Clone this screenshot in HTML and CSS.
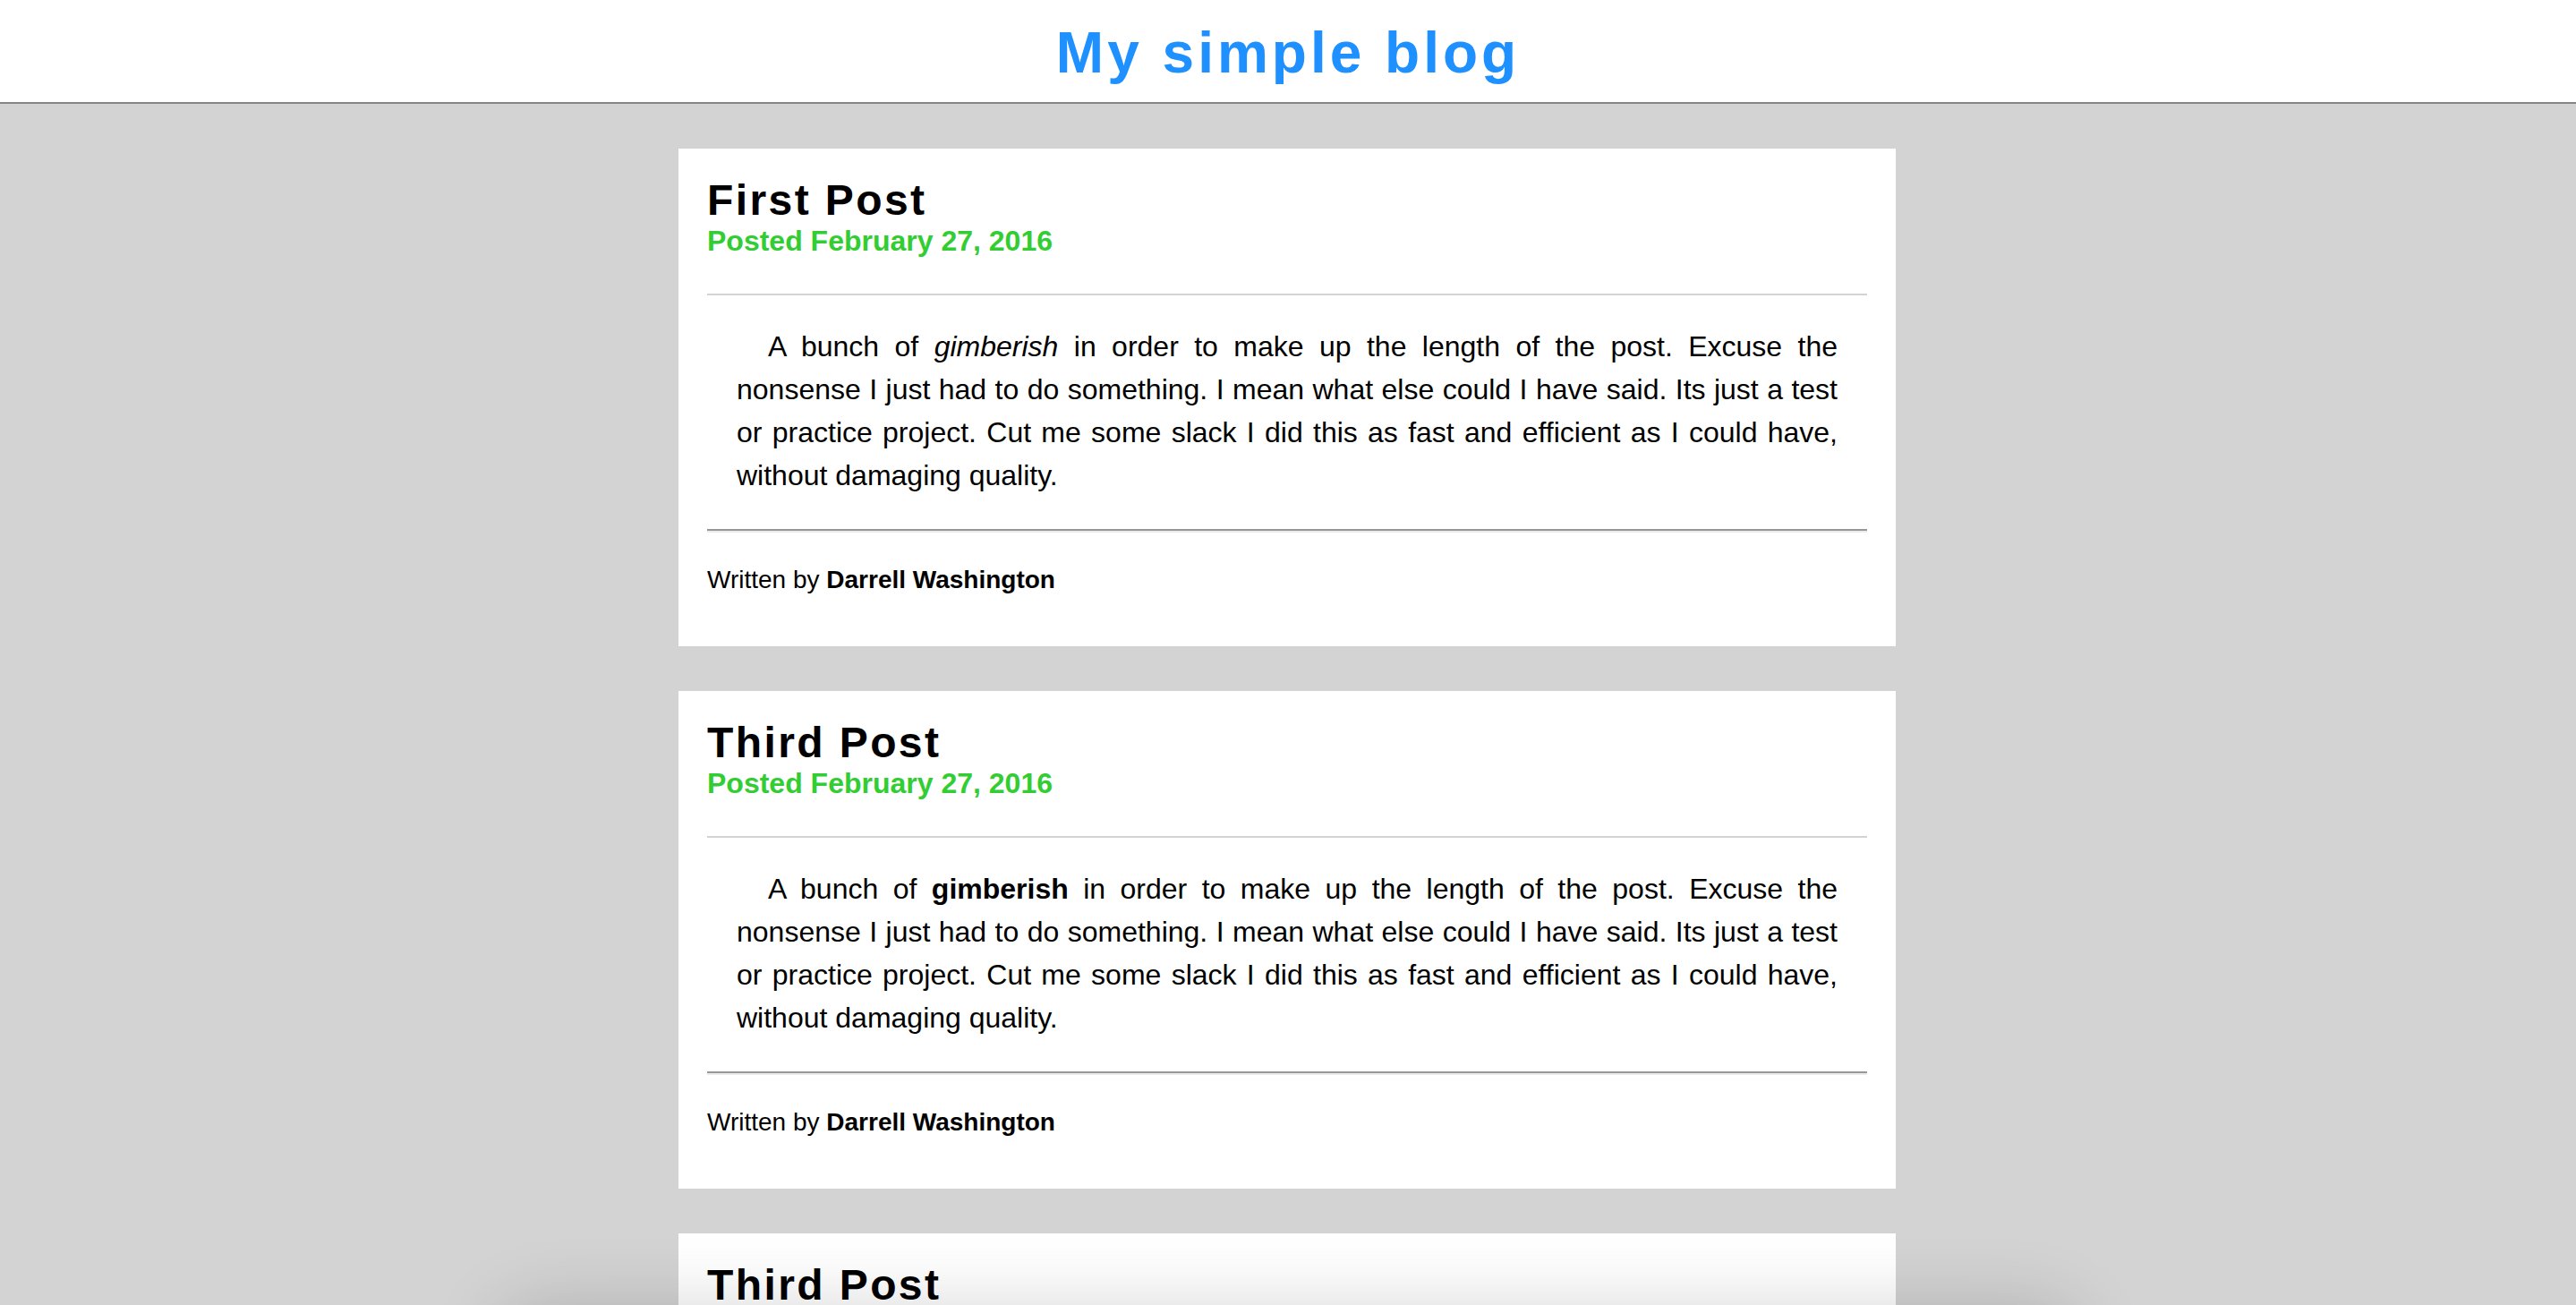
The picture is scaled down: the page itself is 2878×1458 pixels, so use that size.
FILE: index.html
```html
<!DOCTYPE html>
<html lang="en">
<head>
<meta charset="utf-8">
<title>My simple blog</title>
<link rel="stylesheet" href="styles.css">
</head>
<body>
<header class="site-header">
  <h1 class="site-title">My simple blog</h1>
</header>
<main class="posts">
  <article class="post">
    <div class="post-head">
      <h2 class="post-title">First Post</h2>
      <p class="post-date">Posted February 27, 2016</p>
    </div>
    <hr class="rule-light">
    <p class="post-body">A bunch of <em>gimberish</em> in order to make up the length of the post. Excuse the nonsense I just had to do something. I mean what else could I have said. Its just a test or practice project. Cut me some slack I did this as fast and efficient as I could have, without damaging quality.</p>
    <hr class="rule-dark">
    <p class="post-author">Written by <strong>Darrell Washington</strong></p>
  </article>
  <article class="post">
    <div class="post-head">
      <h2 class="post-title">Third Post</h2>
      <p class="post-date">Posted February 27, 2016</p>
    </div>
    <hr class="rule-light">
    <p class="post-body">A bunch of <strong>gimberish</strong> in order to make up the length of the post. Excuse the nonsense I just had to do something. I mean what else could I have said. Its just a test or practice project. Cut me some slack I did this as fast and efficient as I could have, without damaging quality.</p>
    <hr class="rule-dark">
    <p class="post-author">Written by <strong>Darrell Washington</strong></p>
  </article>
  <article class="post">
    <div class="post-head">
      <h2 class="post-title">Third Post</h2>
      <p class="post-date">Posted February 27, 2016</p>
    </div>
    <hr class="rule-light">
    <p class="post-body">A bunch of <strong>gimberish</strong> in order to make up the length of the post. Excuse the nonsense I just had to do something. I mean what else could I have said. Its just a test or practice project. Cut me some slack I did this as fast and efficient as I could have, without damaging quality.</p>
    <hr class="rule-dark">
    <p class="post-author">Written by <strong>Darrell Washington</strong></p>
  </article>
</main>
<div class="bottom-shade"></div>
</body>
</html>
```
FILE: styles.css
```css
html, body {
  margin: 0;
  padding: 0;
}
body {
  background: #d3d3d3;
  font-family: "Liberation Sans", Arial, sans-serif;
  color: #000;
}
.site-header {
  background: #fff;
  box-sizing: content-box;
  height: 92px;
  padding-top: 22px;
  border-bottom: 2px solid #858585;
}
.site-title {
  margin: 0;
  text-align: center;
  font-size: 64px;
  line-height: 74px;
  font-weight: 700;
  letter-spacing: 4px;
  color: #1e90ff;
}
.posts {
  display: flex;
  flex-direction: column;
  align-items: center;
  gap: 50px;
  padding: 50px 0 50px;
}
.post {
  width: 1360px;
  box-sizing: border-box;
  background: #fff;
  padding: 30px 32px 27px;
  margin-left: -2px;
}
.post-head {
  display: flex;
  flex-direction: column;
}
.post-title {
  margin: 0;
  font-size: 48px;
  font-weight: 700;
  letter-spacing: 0.05em;
  line-height: 55px;
}
.post-date {
  margin: 0;
  font-size: 32px;
  font-weight: 700;
  line-height: 37px;
  color: #32cd32;
}
.rule-light {
  margin: 40px 0 0;
  border: 0;
  border-top: 2px solid #d3d3d3;
  height: 0;
}
.post-body {
  margin: 33px 33px 36px;
  font-size: 32px;
  line-height: 48px;
  text-align: justify;
  text-indent: 35px;
}
.rule-dark {
  margin: 0;
  border: 0;
  border-top: 2px solid #979797;
  border-bottom: 2px solid #ebebeb;
  height: 0;
}
.post-author {
  margin: 37px 0 32px;
  font-size: 28px;
  line-height: 31px;
}
.bottom-shade {
  position: fixed;
  left: 50%;
  bottom: -120px;
  width: 1780px;
  height: 120px;
  margin-left: -890px;
  border-radius: 60px;
  box-shadow: 0 0 80px rgba(0, 0, 0, 0.16);
  pointer-events: none;
}
```
